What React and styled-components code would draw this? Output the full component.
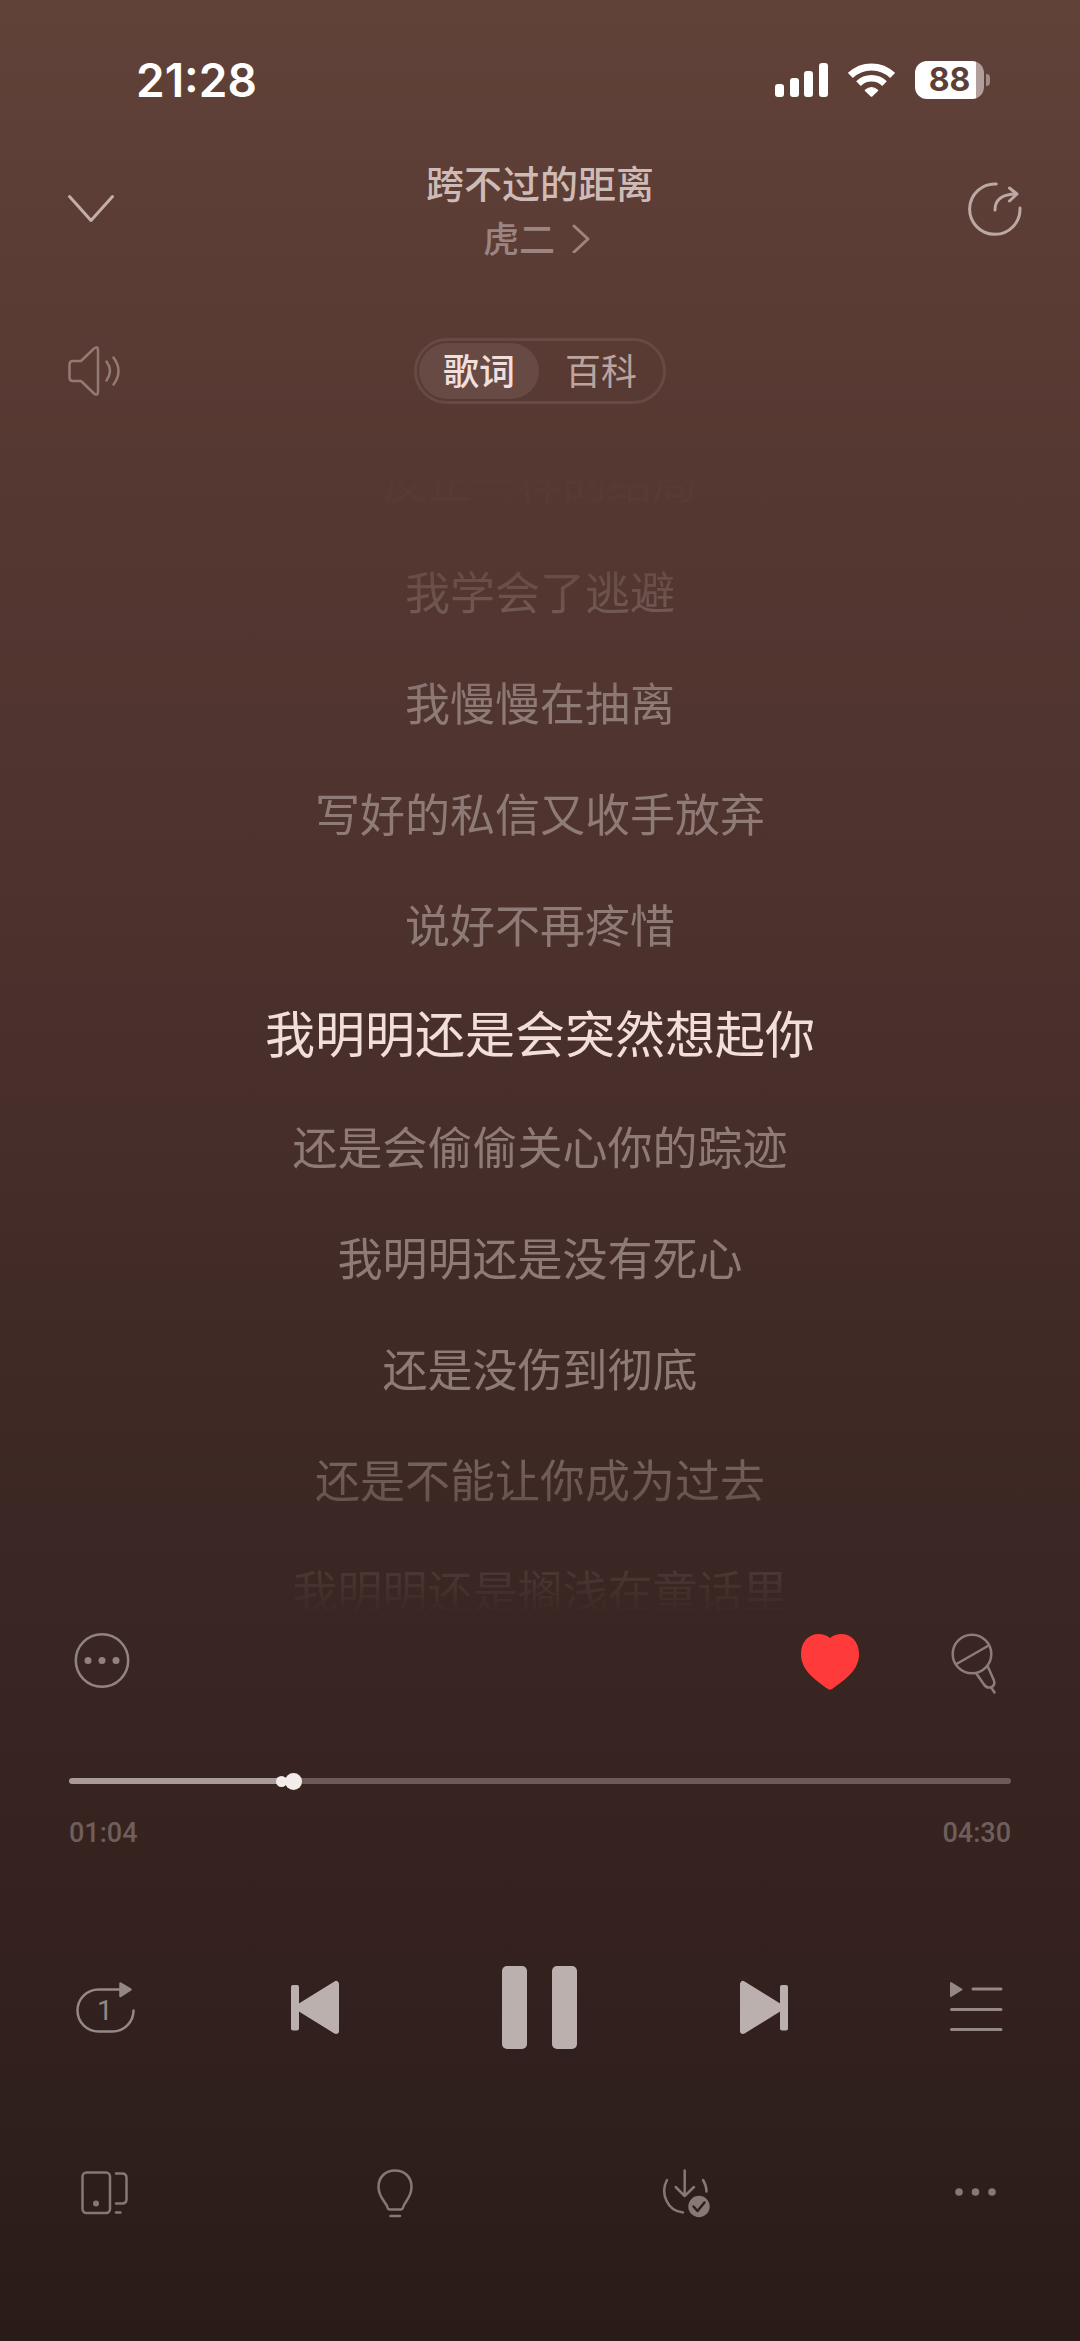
import React from "react";
import styled, { createGlobalStyle } from "styled-components";

const GlobalStyle = createGlobalStyle`
  * {
    box-sizing: border-box;
  }
  body {
    margin: 0;
    background-color: #2a1b19;
    font-family: "Noto Sans CJK SC", "Noto Sans", sans-serif;
  }
`;
const Page = styled.div`
  display: flex;
  flex-direction: column;
  min-height: 100vh;
  padding: 48px 0 117px;
  background: linear-gradient(
    #614239 0%,
    #563832 20%,
    #4a302c 43%,
    #3b2723 65%,
    #35221f 82%,
    #2f1f1d 90%,
    #2a1b19 100%
  );
`;
const StatusBar = styled.div`
  display: flex;
  align-items: center;
  justify-content: space-between;
  height: 64px;
  padding: 0 90px 0 136px;
  color: white;
  font-family: Inter, sans-serif;
`;
const Clock = styled.span`
  font-size: 46px;
  font-weight: 600;
  line-height: 64px;
`;
const StatusIcons = styled.div`
  display: flex;
  align-items: center;
  gap: 20px;
`;
const Battery = styled.div`
  display: flex;
  align-items: center;
  gap: 2px;
`;
const BatteryBody = styled.span`
  width: 69px;
  border-radius: 12px;
  background: linear-gradient(
    to right,
    white ${(props) => props.$level}%,
    #b09f9b ${(props) => props.$level}%
  );
  color: #5d3f37;
  font-size: 32px;
  font-weight: 700;
  line-height: 38px;
  text-align: center;
`;
const BatteryTip = styled.span`
  width: 4px;
  height: 12px;
  border-radius: 0 6px 6px 0;
  background-color: #a08d88;
`;
const Header = styled.header`
  display: flex;
  align-items: center;
  justify-content: space-between;
  margin-top: 45px;
  padding: 0 56px;
`;
const SongInfo = styled.div`
  display: flex;
  flex-direction: column;
  align-items: center;
  gap: 8px;
`;
const SongTitle = styled.h1`
  margin: 0;
  color: #cfbbb6;
  font-size: 38px;
  font-weight: 500;
  line-height: 50px;
`;
const Artist = styled.a`
  display: flex;
  align-items: center;
  gap: 14px;
  color: #9c8580;
  font-size: 36px;
  font-weight: 500;
  line-height: 44px;
  text-decoration: none;
`;
const IconButton = styled.button`
  display: flex;
  flex-shrink: 0;
  align-items: center;
  justify-content: center;
  justify-self: start;
  padding: 0;
  border: none;
  background: none;
  color: ${(props) => props.$color};
`;
const ViewBar = styled.div`
  display: grid;
  grid-template-columns: 1fr auto 1fr;
  align-items: center;
  margin: 79px 0 20px;
  padding: 0 56px;
`;
const Tabs = styled.div`
  display: flex;
  gap: 2px;
  padding: 2px;
  border: 3px solid #674a43;
  border-radius: 33px;
`;
const Tab = styled.button`
  width: 120px;
  height: 56px;
  padding: 0 0 4px;
  border: none;
  border-radius: 28px;
  background-color: ${(props) => (props.$active ? "#674a44" : "transparent")};
  color: ${(props) => (props.$active ? "#f0dfdb" : "#bba49f")};
  font-family: inherit;
  font-size: 36px;
  font-weight: ${(props) => (props.$active ? 500 : 400)};
  line-height: 52px;
`;
const Lyrics = styled.div`
  flex: 1 0 auto;
  mask-image: linear-gradient(
    transparent 56px,
    rgba(0, 0, 0, 0.03) 57px,
    rgba(0, 0, 0, 0.08) 90px,
    rgba(0, 0, 0, 0.4) 168px,
    black 278px,
    black calc(100% - 250px),
    transparent calc(100% - 28px)
  );
`;
const Line = styled.p`
  height: 111px;
  margin: 0;
  color: ${(props) => (props.$active ? "#f3dfda" : "#8e7a76")};
  font-size: ${(props) => (props.$active ? 50 : 45)}px;
  line-height: ${(props) => (props.$active ? 104 : 111)}px;
  text-align: center;
`;
/* pulled up over the faded end of the lyrics */
const ActionBar = styled.div`
  display: flex;
  justify-content: space-between;
  margin-top: -17px;
  padding: 0 72px;
`;
const ActionGroup = styled.div`
  display: flex;
  gap: 82px;
`;
const Progress = styled.div`
  position: relative;
  display: flex;
  margin: 77px 69px 0;
`;
const Slider = styled.input`
  width: 100%;
  height: 24px;
  margin: 0;
  background: none;
  appearance: none;

  &::-webkit-slider-runnable-track {
    height: 6px;
    border-radius: 3px;
    background: linear-gradient(to right, #a89a97 24%, #6d5a57 24%);
  }
  &::-webkit-slider-thumb {
    width: 17px;
    height: 17px;
    margin-top: -5px;
    border-radius: 50%;
    background-color: #f3eceb;
    appearance: none;
  }
`;
const ChorusMark = styled.span`
  position: absolute;
  left: 22%;
  top: 7px;
  width: 11px;
  height: 11px;
  border-radius: 50%;
  background-color: #f3eceb;
`;
const Times = styled.div`
  display: flex;
  justify-content: space-between;
  margin-top: 22px;
  padding: 0 69px;
  color: #6f5f5c;
  font-family: Roboto, sans-serif;
  font-size: 27px;
  font-weight: 500;
  line-height: 36px;
`;
const Controls = styled.div`
  display: flex;
  align-items: center;
  justify-content: space-between;
  margin-top: 109px;
  padding: 0 72px;
`;
const BottomBar = styled(Controls)`
  margin-top: 104px;
`;
const IconText = styled.text`
  font-family: Roboto, sans-serif;
  font-size: 28px;
`;

const lyrics = [
  "反正一样的结局",
  "我学会了逃避",
  "我慢慢在抽离",
  "写好的私信又收手放弃",
  "说好不再疼惜",
  "我明明还是会突然想起你",
  "还是会偷偷关心你的踪迹",
  "我明明还是没有死心",
  "还是没伤到彻底",
  "还是不能让你成为过去",
  "我明明还是搁浅在童话里",
];

const Icon = ({ size = 64, stroke = 3, children }) => (
  <svg
    width={size}
    height={size}
    viewBox={`0 0 ${size} ${size}`}
    fill="none"
    stroke="currentColor"
    strokeWidth={stroke}
    strokeLinecap="round"
    strokeLinejoin="round"
    overflow="visible"
    aria-hidden="true"
  >
    {children}
  </svg>
);

const Signal = () => (
  <svg width="53" height="34" viewBox="0 0 53 34" fill="white">
    <rect x="0" y="21" width="9" height="13" rx="3" />
    <rect x="15" y="15" width="9" height="19" rx="3" />
    <rect x="29" y="8" width="9" height="26" rx="3" />
    <rect x="44" y="0" width="9" height="34" rx="3" />
  </svg>
);

const Wifi = () => (
  <svg width="47" height="34" viewBox="0 0 47 34" fill="none" stroke="white">
    <path d="M2.4 12.4A30.4 30.4 0 0 1 44.6 12.4" strokeWidth="7" />
    <path d="M10.5 20.6A18.3 18.3 0 0 1 36.5 20.6" strokeWidth="6.5" />
    <path
      d="M17 26.7Q23.5 21.2 30 26.7Q30.6 27.3 30 28L24.3 33.4Q23.5 34.2 22.7 33.4L17 28Q16.4 27.3 17 26.7Z"
      fill="white"
      stroke="none"
    />
  </svg>
);

class App extends React.Component {
  state = {
    tab: "歌词",
    position: 63,
  };

  onChangePosition = (event) => {
    this.setState({ position: Number(event.target.value) });
  };

  render() {
    const tabs = ["歌词", "百科"].map((name) => (
      <Tab
        key={name}
        $active={this.state.tab === name}
        onClick={() => this.setState({ tab: name })}
      >
        {name}
      </Tab>
    ));
    const lines = lyrics.map((text, index) => (
      <Line key={index} $active={index === 5}>
        {text}
      </Line>
    ));

    return (
      <Page>
        <GlobalStyle />
        <StatusBar>
          <Clock>21:28</Clock>
          <StatusIcons>
            <Signal />
            <Wifi />
            <Battery>
              <BatteryBody $level={88}>88</BatteryBody>
              <BatteryTip />
            </Battery>
          </StatusIcons>
        </StatusBar>

        <Header>
          <IconButton $color="#c3aea9" aria-label="收起">
            <Icon>
              <path d="M13.5 20.5L35 44.5L56.5 20.5" />
            </Icon>
          </IconButton>
          <SongInfo>
            <SongTitle>跨不过的距离</SongTitle>
            <Artist href="#artist">
              虎二
              <svg width="28" height="32" viewBox="0 0 28 32" fill="none">
                <path
                  d="M5 5L19 18L5 31"
                  stroke="currentColor"
                  strokeWidth="3"
                  strokeLinecap="round"
                  strokeLinejoin="round"
                />
              </svg>
            </Artist>
          </SongInfo>
          <IconButton $color="#bda8a3" aria-label="分享">
            <Icon>
              <path d="M36.3 8A25.2 25.2 0 1 0 60 32" />
              <path d="M35 34C35 24 42 18 56 18" />
              <path d="M49.5 12L57 18L49.5 25" />
            </Icon>
          </IconButton>
        </Header>

        <ViewBar>
          <IconButton $color="#927a75" aria-label="音效">
            <Icon stroke={2.5}>
              <path d="M17 22H25L37.500 10Q42 6 42 12V52Q42 58 37.500 54L25 42H17Q13.500 42 13.500 38.500V25.500Q13.500 22 17 22Z" />
              <path d="M50.500 22.500Q57.500 32 50.500 41.500M57.500 18.500Q67.500 32 57.500 45.500" />
            </Icon>
          </IconButton>
          <Tabs>{tabs}</Tabs>
        </ViewBar>

        <Lyrics>{lines}</Lyrics>

        <ActionBar>
          <IconButton $color="#918480" aria-label="评论">
            <Icon stroke={2.5}>
              <circle cx="30" cy="32.5" r="26.2" />
              <g fill="currentColor" stroke="none">
                <circle cx="16" cy="32.5" r="3.5" />
                <circle cx="30" cy="32.5" r="3.5" />
                <circle cx="44" cy="32.5" r="3.5" />
              </g>
            </Icon>
          </IconButton>
          <ActionGroup>
            <IconButton $color="#ff3a3a" aria-label="喜欢">
              <Icon>
                <path
                  d="M32 10C28 7 25 6 20.500 6C10.500 6 3 14 3 26C3 42 16 51 30 61Q32 62.200 34 61C48 51 61 42 61 26C61 14 53.500 6 43.500 6C39 6 36 7 32 10Z"
                  fill="currentColor"
                  stroke="none"
                />
              </Icon>
            </IconButton>
            <IconButton $color="#8d7d7a" aria-label="K歌">
              <Icon stroke={2.5}>
                <circle cx="28" cy="26" r="19.3" />
                <path d="M12.5 36L44.7 17.500" />
                <path d="M32.3 45.5L40 56.5C43.5 62 52 59.5 50 52.5L43.8 38.5" />
                <path d="M47.5 60L50.5 64.5" />
              </Icon>
            </IconButton>
          </ActionGroup>
        </ActionBar>

        <Progress>
          <Slider
            type="range"
            min="0"
            max="270"
            value={this.state.position}
            onChange={this.onChangePosition}
            aria-label="播放进度"
          />
          <ChorusMark />
        </Progress>
        <Times>
          <span>01:04</span>
          <span>04:30</span>
        </Times>

        <Controls>
          <IconButton $color="#948885" aria-label="单曲循环">
            <Icon stroke={2.5}>
              <path d="M47 13.5H26.5A21 21 0 0 0 26.5 55.5H40.5A21 21 0 0 0 61.5 34.5" />
              <path d="M48.5 7.5L58.5 13.5L48.5 20Z" fill="currentColor" />
              <IconText x="25" y="44" fill="currentColor" stroke="none">
                1
              </IconText>
            </Icon>
          </IconButton>
          <IconButton $color="#bbb0ae" aria-label="上一首">
            <Icon stroke={6}>
              <path d="M16 31.5L54 8V55Z" fill="currentColor" />
              <path d="M11 11H15V52.5H11Z" strokeWidth="4" fill="currentColor" />
            </Icon>
          </IconButton>
          <IconButton $color="#bbb0ae" aria-label="暂停">
            <Icon size={96}>
              <g fill="currentColor" stroke="none">
                <rect x="10" y="6" width="25" height="83" rx="5" />
                <rect x="60" y="6" width="25" height="83" rx="5" />
              </g>
            </Icon>
          </IconButton>
          <IconButton $color="#bbb0ae" aria-label="下一首">
            <Icon stroke={6}>
              <path d="M47 31.5L9 8V55Z" fill="currentColor" />
              <path d="M48 11H52V52.5H48Z" strokeWidth="4" fill="currentColor" />
            </Icon>
          </IconButton>
          <IconButton $color="#948885" aria-label="播放列表">
            <Icon>
              <path d="M29 13H57M7.5 33.5H57M7.5 53.5H57" />
              <path
                d="M7 7L17.5 13.5L7 20Z"
                strokeWidth="2"
                fill="currentColor"
              />
            </Icon>
          </IconButton>
        </Controls>

        <BottomBar>
          <IconButton $color="#857875" aria-label="设备">
            <Icon stroke={2.5}>
              <rect x="10.5" y="12.5" width="27.5" height="40.5" rx="4" />
              <circle cx="24" cy="43.5" r="3" fill="currentColor" stroke="none" />
              <path d="M44 13.5H50Q54.5 13.5 54.5 18V39Q54.5 43.500 50 43.5H44M44 52.5H48.5" />
            </Icon>
          </IconButton>
          <IconButton $color="#857875" aria-label="灵感">
            <Icon stroke={2.5}>
              <path d="M27 49.5Q25 49.5 24.5 47.5C23.5 42 15.5 38 15.5 27C15.5 17 22.5 10.5 32 10.5S48.5 17 48.5 27C48.5 38 41 42 40 47.5Q39.5 49.5 37.5 49.5Z" />
              <path d="M27.5 56H37" />
            </Icon>
          </IconButton>
          <IconButton $color="#857875" aria-label="已下载">
            <Icon stroke={2.5}>
              <path d="M31.7 10.5V36M22.7 27L31.7 36L41 27" />
              <path d="M14 20C7 33 14 51 30 52.5M50 20Q53.5 25.5 53.5 31.5" />
              <circle cx="46" cy="46.5" r="10.7" fill="currentColor" stroke="none" />
              <path d="M40.5 46.5L44.5 51L51.5 42.5" stroke="#2d1e1b" />
            </Icon>
          </IconButton>
          <IconButton $color="#857875" aria-label="更多">
            <Icon>
              <g fill="currentColor" stroke="none">
                <circle cx="15" cy="32" r="3.8" />
                <circle cx="31.5" cy="32" r="3.8" />
                <circle cx="48" cy="32" r="3.8" />
              </g>
            </Icon>
          </IconButton>
        </BottomBar>
      </Page>
    );
  }
}

export default App;
